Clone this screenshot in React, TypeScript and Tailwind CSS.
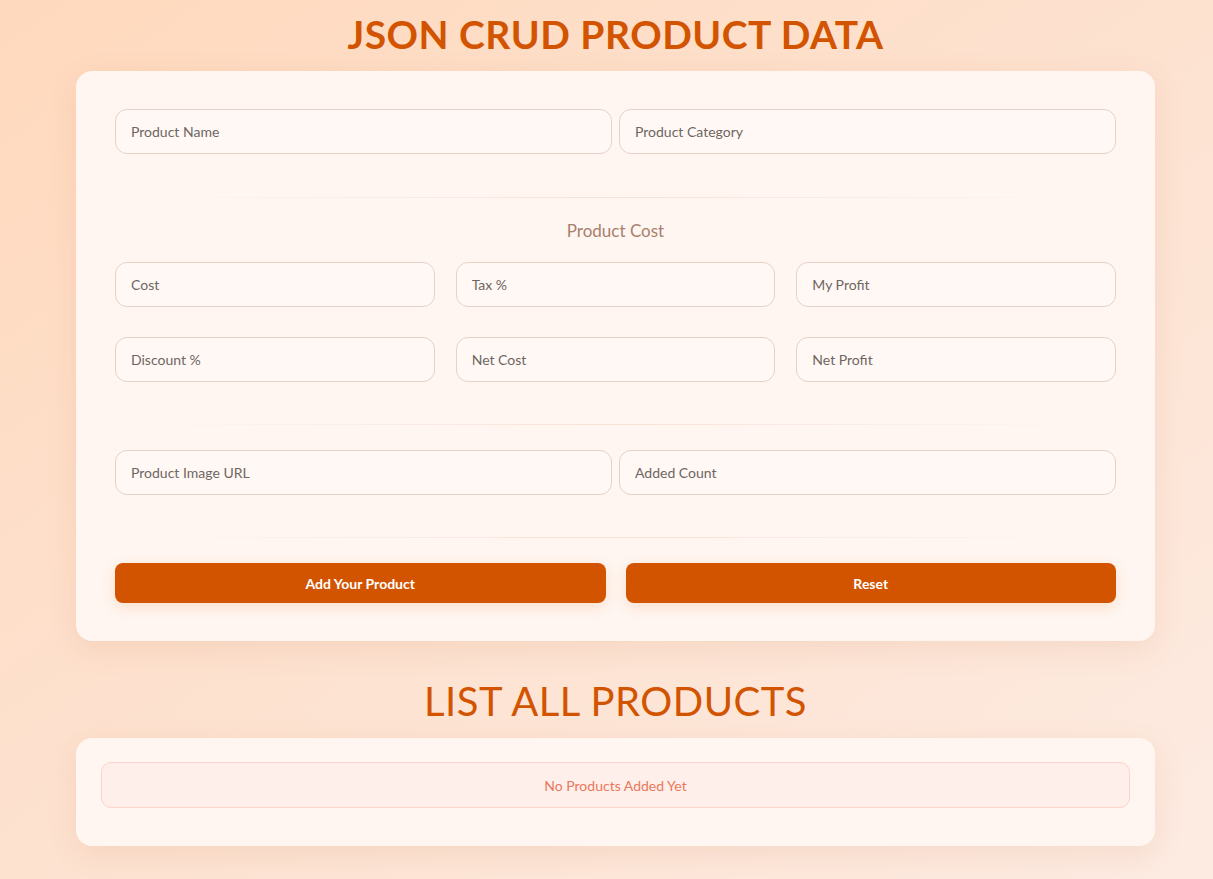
import React from "react";

const inputClass =
  "h-[45px] w-full rounded-[12px] border border-[#e6d2c6] bg-[#fff8f5] px-[15px] text-[14px] text-[#555] placeholder:text-[#6e6661] outline-none";

function Field(props: { placeholder: string }) {
  return <input className={inputClass} placeholder={props.placeholder} />;
}

function Divider() {
  return (
    <div className="h-px mx-[10px] bg-gradient-to-r from-transparent via-[#f7e3d8] to-transparent" />
  );
}

export default function App() {
  return (
    <div className="min-h-screen bg-gradient-to-br from-[#ffd9bd] via-[#fde2d0] to-[#fdebe2] pb-[32px] font-['Lato',sans-serif]">
      <div className="ml-[76px] w-[1079px]">
        <h1 className="pt-[8px] text-center text-[39px] font-bold leading-[52px] tracking-[0.5px] text-[#d35400]">
          JSON CRUD PRODUCT DATA
        </h1>

        <div className="mt-[11px] rounded-[16px] bg-[#fff6f1] px-[39px] pt-[38px] pb-[38px] shadow-[0_8px_30px_rgba(190,110,60,0.12)]">
          <div className="grid grid-cols-2 gap-[7px]">
            <Field placeholder="Product Name" />
            <Field placeholder="Product Category" />
          </div>

          <div className="mt-[43px]">
            <Divider />
          </div>

          <p className="mt-[21px] text-center text-[17px] leading-[24px] text-[#a8806d]">
            Product Cost
          </p>

          <div className="mt-[19px] grid grid-cols-3 gap-x-[21px] gap-y-[30px]">
            <Field placeholder="Cost" />
            <Field placeholder="Tax %" />
            <Field placeholder="My Profit" />
            <Field placeholder="Discount %" />
            <Field placeholder="Net Cost" />
            <Field placeholder="Net Profit" />
          </div>

          <div className="mt-[42px]">
            <Divider />
          </div>

          <div className="mt-[25px] grid grid-cols-2 gap-[7px]">
            <Field placeholder="Product Image URL" />
            <Field placeholder="Added Count" />
          </div>

          <div className="mt-[42px]">
            <Divider />
          </div>

          <div className="mt-[25px] grid grid-cols-2 gap-[20px]">
            <button className="h-[40px] rounded-[8px] bg-[#d35400] text-[14px] font-bold text-white shadow-[0_4px_14px_rgba(230,120,40,0.18)]">
              Add Your Product
            </button>
            <button className="h-[40px] rounded-[8px] bg-[#d35400] text-[14px] font-bold text-white shadow-[0_4px_14px_rgba(230,120,40,0.18)]">
              Reset
            </button>
          </div>
        </div>

        <h2 className="mt-[34px] text-center text-[40px] font-normal leading-[52px] tracking-[0.5px] text-[#d35400]">
          LIST ALL PRODUCTS
        </h2>

        <div className="mt-[11px] rounded-[16px] bg-[#fff6f1] px-[25px] pt-[24px] pb-[38px] shadow-[0_8px_30px_rgba(190,110,60,0.12)]">
          <div className="flex h-[46px] items-center justify-center rounded-[10px] border border-[#fdd3cd] bg-[#ffefeb] text-[14px] text-[#e9785c]">
            No Products Added Yet
          </div>
        </div>
      </div>
    </div>
  );
}
